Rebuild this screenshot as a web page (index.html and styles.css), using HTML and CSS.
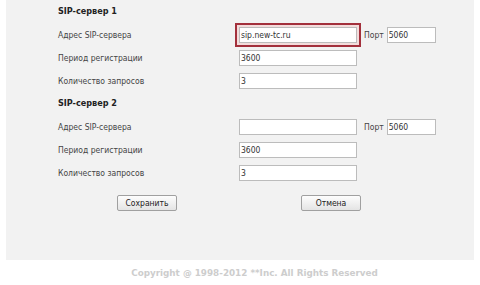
FILE: index.html
```html
<!DOCTYPE html>
<html lang="ru">
<head>
  <meta charset="UTF-8" />
  <title>SIP</title>
  <link rel="stylesheet" href="styles.css">
</head>
<body>
  <div class="panel">
    <div class="form">
      <div class="section-title">SIP-сервер 1</div>
      <label class="label">Адрес SIP-сервера</label>
      <div class="field">
        <input type="text" class="input input-wide input-focus" value="sip.new-tc.ru">
        <span class="port-label">Порт</span>
        <input type="text" class="input input-port" value="5060">
      </div>
      <label class="label">Период регистрации</label>
      <div class="field"><input type="text" class="input input-wide" value="3600"></div>
      <label class="label">Количество запросов</label>
      <div class="field"><input type="text" class="input input-wide" value="3"></div>

      <div class="section-title">SIP-сервер 2</div>
      <label class="label">Адрес SIP-сервера</label>
      <div class="field">
        <input type="text" class="input input-wide" value="">
        <span class="port-label">Порт</span>
        <input type="text" class="input input-port" value="5060">
      </div>
      <label class="label">Период регистрации</label>
      <div class="field"><input type="text" class="input input-wide" value="3600"></div>
      <label class="label">Количество запросов</label>
      <div class="field"><input type="text" class="input input-wide" value="3"></div>
    </div>

    <div class="buttons">
      <button class="btn">Сохранить</button>
      <button class="btn">Отмена</button>
    </div>
  </div>

  <div class="copyright">Copyright @ 1998-2012 **Inc. All Rights Reserved</div>
</body>
</html>
```

FILE: styles.css
```css
body {
  margin: 0;
  background-color: #fff;
  color: #444;
  font-family: 'DejaVu Sans Condensed', 'DejaVu Sans', sans-serif;
  font-size: 8.5px;
}

.panel {
  margin: 0 6px;
  height: 260px;
  background-color: #f2f2f2;
  box-sizing: border-box;
}

.form {
  display: grid;
  grid-template-columns: 181px 1fr;
  grid-auto-rows: 23px;
  padding-left: 52px;
}

.section-title {
  grid-column: 1 / 3;
  font-weight: bold;
  font-size: 9px;
  color: #222;
  height: 22px;
  line-height: 22px;
}

.label {
  display: flex;
  align-items: center;
}

.field {
  display: flex;
  align-items: center;
  gap: 6px;
}

.input {
  box-sizing: border-box;
  height: 16px;
  border: 1px solid #bcbcbc;
  background-color: #fff;
  color: #333;
  font-family: 'DejaVu Sans Condensed', 'DejaVu Sans', sans-serif;
  font-size: 8.5px;
  padding: 0 1px;
  margin: 0;
}

.input-wide {
  width: 118px;
}

.input-port {
  width: 49px;
  margin-left: -3px;
}

.input-focus {
  outline: 2px solid #a3303c;
  outline-offset: 2px;
  box-shadow: 0 0 0 2px #f3dcdc;
}

.port-label {
  margin-left: 1px;
}

.buttons {
  display: flex;
  gap: 124px;
  padding-left: 111px;
  margin-top: 11px;
}

.btn {
  width: 60px;
  height: 16px;
  padding: 0;
  border: 1px solid #a0a0a0;
  border-radius: 2px;
  background: linear-gradient(#fdfdfd, #e4e4e4);
  color: #222;
  font-family: 'DejaVu Sans Condensed', 'DejaVu Sans', sans-serif;
  font-size: 8.5px;
}

.copyright {
  text-align: center;
  padding-left: 29px;
  margin-top: 8px;
  color: #cdcdcd;
  font-family: 'DejaVu Sans', sans-serif;
  font-weight: bold;
  font-size: 8.8px;
}
```
